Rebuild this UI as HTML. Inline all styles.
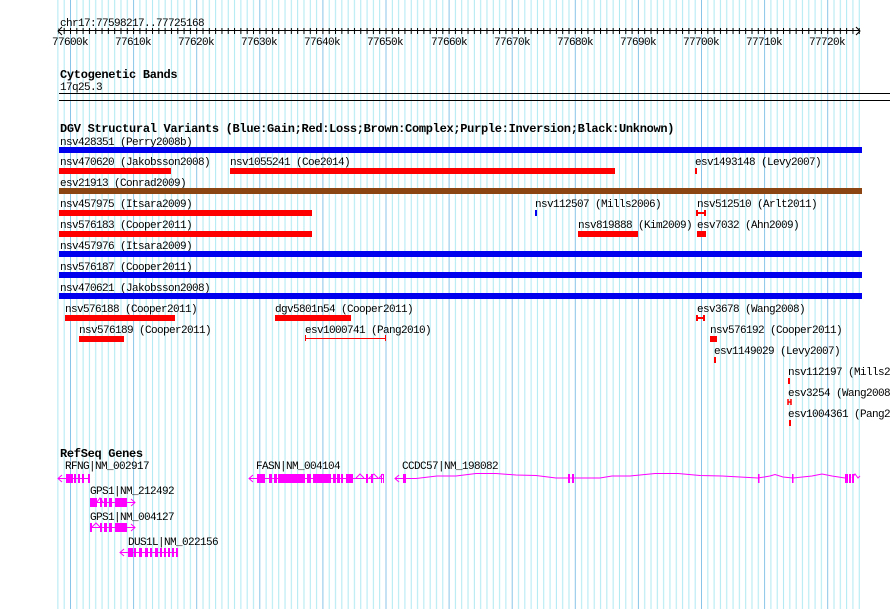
<!DOCTYPE html>
<html><head><meta charset="utf-8"><style>
html,body{margin:0;padding:0;background:#fff;width:890px;height:609px;overflow:hidden}
svg text{font-family:"Liberation Mono",monospace;font-size:11px;letter-spacing:-0.6px;fill:#000}
svg text.b{font-weight:bold;font-size:12px;letter-spacing:-0.3px}
</style></head><body>
<svg width="890" height="609" viewBox="0 0 890 609" xmlns="http://www.w3.org/2000/svg">
<defs>
<pattern id="g" patternUnits="userSpaceOnUse" x="70" y="0" width="63.1" height="10">
<rect x="0" y="0" width="1" height="10" fill="#88c4e8"/>
<rect x="6.31" y="0" width="1" height="10" fill="#aee9f2"/>
<rect x="12.62" y="0" width="1" height="10" fill="#aee9f2"/>
<rect x="18.93" y="0" width="1" height="10" fill="#aee9f2"/>
<rect x="25.24" y="0" width="1" height="10" fill="#aee9f2"/>
<rect x="31.55" y="0" width="1" height="10" fill="#aee9f2"/>
<rect x="37.86" y="0" width="1" height="10" fill="#aee9f2"/>
<rect x="44.17" y="0" width="1" height="10" fill="#aee9f2"/>
<rect x="50.48" y="0" width="1" height="10" fill="#aee9f2"/>
<rect x="56.79" y="0" width="1" height="10" fill="#aee9f2"/>
</pattern>
<pattern id="t" patternUnits="userSpaceOnUse" x="70" y="0" width="6.31" height="10">
<rect x="0" y="0" width="1" height="10" fill="#000"/>
</pattern>
</defs>
<rect x="57" y="0" width="805" height="609" fill="url(#g)"/>

<text x="60" y="26">chr17:77598217..77725168</text>
<rect x="58" y="30" width="802" height="1" fill="#000"/>
<rect x="58" y="28" width="802" height="6" fill="url(#t)"/>
<path d="M62,27 L58,31 L62,35 M856,27 L860,31 L856,35" stroke="#000" fill="none"/>
<g text-anchor="middle">
<text x="70" y="45">77600k</text><text x="133" y="45">77610k</text><text x="196" y="45">77620k</text><text x="259" y="45">77630k</text><text x="322" y="45">77640k</text><text x="385" y="45">77650k</text><text x="449" y="45">77660k</text><text x="512" y="45">77670k</text><text x="575" y="45">77680k</text><text x="638" y="45">77690k</text><text x="701" y="45">77700k</text><text x="764" y="45">77710k</text><text x="827" y="45">77720k</text>
</g>

<text class="b" x="60" y="78">Cytogenetic Bands</text>
<text x="60" y="90">17q25.3</text>
<rect x="59" y="93" width="831" height="1" fill="#000"/>
<rect x="59" y="100" width="831" height="1" fill="#000"/>

<text class="b" x="60" y="132">DGV Structural Variants (Blue:Gain;Red:Loss;Brown:Complex;Purple:Inversion;Black:Unknown)</text>
<text x="60" y="145">nsv428351 (Perry2008b)</text>
<rect x="59" y="147" width="803" height="6" fill="#0000ee"/>

<text x="60" y="165">nsv470620 (Jakobsson2008)</text>
<text x="230" y="165">nsv1055241 (Coe2014)</text>
<text x="695" y="165">esv1493148 (Levy2007)</text>
<rect x="59" y="168" width="112" height="6" fill="#f00"/>
<rect x="230" y="168" width="385" height="6" fill="#f00"/>
<rect x="695" y="168" width="2" height="6" fill="#f00"/>

<text x="60" y="186">esv21913 (Conrad2009)</text>
<rect x="59" y="188" width="803" height="6" fill="#8b4513"/>

<text x="60" y="207">nsv457975 (Itsara2009)</text>
<text x="535" y="207">nsv112507 (Mills2006)</text>
<text x="697" y="207">nsv512510 (Arlt2011)</text>
<rect x="59" y="210" width="253" height="6" fill="#f00"/>
<rect x="535" y="210" width="2" height="6" fill="#0000ee"/>
<path d="M697,210v6M705,210v6M697,213h8" stroke="#f00" stroke-width="2"/>

<text x="60" y="228">nsv576183 (Cooper2011)</text>
<text x="578" y="228">nsv819888 (Kim2009)</text>
<text x="697" y="228">esv7032 (Ahn2009)</text>
<rect x="59" y="231" width="253" height="6" fill="#f00"/>
<rect x="578" y="231" width="60" height="6" fill="#f00"/>
<rect x="697" y="231" width="9" height="6" fill="#f00"/>

<text x="60" y="249">nsv457976 (Itsara2009)</text>
<rect x="59" y="251" width="803" height="6" fill="#0000ee"/>
<text x="60" y="270">nsv576187 (Cooper2011)</text>
<rect x="59" y="272" width="803" height="6" fill="#0000ee"/>
<text x="60" y="291">nsv470621 (Jakobsson2008)</text>
<rect x="59" y="293" width="803" height="6" fill="#0000ee"/>

<text x="65" y="312">nsv576188 (Cooper2011)</text>
<text x="275" y="312">dgv5801n54 (Cooper2011)</text>
<text x="697" y="312">esv3678 (Wang2008)</text>
<rect x="65" y="315" width="110" height="6" fill="#f00"/>
<rect x="275" y="315" width="76" height="6" fill="#f00"/>
<path d="M697,315v6M704,315v6M697,318h7" stroke="#f00" stroke-width="2"/>

<text x="79" y="333">nsv576189 (Cooper2011)</text>
<text x="305" y="333">esv1000741 (Pang2010)</text>
<text x="710" y="333">nsv576192 (Cooper2011)</text>
<rect x="79" y="336" width="45" height="6" fill="#f00"/>
<path d="M305.5,335v6M385.5,335v6M305,338.5h81" stroke="#f00" stroke-width="1"/>
<rect x="710" y="336" width="7" height="6" fill="#f00"/>

<text x="714" y="354">esv1149029 (Levy2007)</text>
<rect x="714" y="357" width="2" height="6" fill="#f00"/>
<text x="788" y="375">nsv112197 (Mills2006)</text>
<rect x="788" y="378" width="2" height="6" fill="#f00"/>
<text x="788" y="396">esv3254 (Wang2008)</text>
<path d="M788,399v6M791,399v6M788,402h3" stroke="#f00" stroke-width="1.5"/>
<text x="788" y="417">esv1004361 (Pang2010)</text>
<rect x="789" y="420" width="2" height="6" fill="#f00"/>

<text class="b" x="60" y="457">RefSeq Genes</text>
<text x="65" y="469">RFNG|NM_002917</text>
<text x="256" y="469">FASN|NM_004104</text>
<text x="402" y="469">CCDC57|NM_198082</text>
<text x="90" y="494">GPS1|NM_212492</text>
<text x="90" y="520">GPS1|NM_004127</text>
<text x="128" y="545">DUS1L|NM_022156</text>

<g fill="#f0f" stroke="#f0f">
<path d="M62,475 L58,478.5 L62,482 M58,478.5 H90" fill="none"/>
<rect x="66" y="474" width="7" height="9" stroke="none"/>
<rect x="74" y="474" width="2" height="9" stroke="none"/>
<rect x="78" y="474" width="2" height="9" stroke="none"/>
<rect x="82" y="474" width="2" height="9" stroke="none"/>
<rect x="88" y="474" width="2" height="9" stroke="none"/>
<path d="M253,475 L249,478.5 L253,482 M249,478.5 H384 M356,478 L360,474 L364,478 M369,478 L374,474 L378,478 M379,478 L383,474" fill="none"/>
<rect x="257" y="474" width="8" height="9" stroke="none"/>
<rect x="269" y="474" width="3" height="9" stroke="none"/>
<rect x="274" y="474" width="3" height="9" stroke="none"/>
<rect x="278" y="474" width="27" height="9" stroke="none"/>
<rect x="307" y="474" width="4" height="9" stroke="none"/>
<rect x="313" y="474" width="18" height="9" stroke="none"/>
<rect x="333" y="474" width="3" height="9" stroke="none"/>
<rect x="337" y="474" width="3" height="9" stroke="none"/>
<rect x="341" y="474" width="2" height="9" stroke="none"/>
<rect x="346" y="474" width="7" height="9" stroke="none"/>
<rect x="366" y="474" width="2" height="9" stroke="none"/>
<rect x="371" y="474" width="2" height="9" stroke="none"/>
<rect x="383" y="474" width="1" height="9" stroke="none"/>
<rect x="381" y="474" width="1" height="9" stroke="none"/>
<path d="M399,475 L395,478.5 L399,482 M395,478.5 H416 L437,476 L456,476 L476,473.5 L496,473.5 L516,475 L536,475.5 L556,478 L600,478 L612,476 L630,476 L655,473.5 L678,473.5 L700,475.5 L722,476 L758,478 L770,476 L775,474.5 L783,477 L793,478 L812,476 L822,474 L832,476 L845,478 M852,478 L855,474 L858,478 L860,476" fill="none" stroke-width="1"/>
<rect x="403" y="474" width="3" height="9" stroke="none"/>
<rect x="568" y="474" width="2" height="9" stroke="none"/>
<rect x="572" y="474" width="2" height="9" stroke="none"/>
<rect x="758" y="474" width="1.5" height="9" stroke="none"/>
<rect x="792" y="474" width="1.5" height="9" stroke="none"/>
<rect x="845" y="474" width="3" height="9" stroke="none"/>
<rect x="849" y="474" width="2" height="9" stroke="none"/>
<rect x="852" y="474" width="2" height="9" stroke="none"/>
<path d="M90,502.5 H135 M131,499 L135,502.5 L131,506 M97,502 L100,498 L103,502" fill="none"/>
<rect x="90" y="498" width="7" height="9" stroke="none"/>
<rect x="100" y="498" width="2" height="9" stroke="none"/>
<rect x="104" y="498" width="3" height="9" stroke="none"/>
<rect x="109" y="498" width="3" height="9" stroke="none"/>
<rect x="115" y="498" width="12" height="9" stroke="none"/>
<path d="M90,527.5 H135 M131,524 L135,527.5 L131,531 M91,528 L96,523 L100,527" fill="none"/>
<rect x="90" y="523" width="2" height="9" stroke="none"/>
<rect x="100" y="523" width="2" height="9" stroke="none"/>
<rect x="104" y="523" width="3" height="9" stroke="none"/>
<rect x="109" y="523" width="3" height="9" stroke="none"/>
<rect x="115" y="523" width="12" height="9" stroke="none"/>
<path d="M124,549 L120,552.5 L124,556 M120,552.5 H178" fill="none"/>
<rect x="128" y="548" width="5" height="9" stroke="none"/>
<rect x="134" y="548" width="2" height="9" stroke="none"/>
<rect x="139" y="548" width="3" height="9" stroke="none"/>
<rect x="145" y="548" width="3" height="9" stroke="none"/>
<rect x="150" y="548" width="2" height="9" stroke="none"/>
<rect x="155" y="548" width="3" height="9" stroke="none"/>
<rect x="160" y="548" width="2" height="9" stroke="none"/>
<rect x="164" y="548" width="2" height="9" stroke="none"/>
<rect x="168" y="548" width="2" height="9" stroke="none"/>
<rect x="172" y="548" width="2" height="9" stroke="none"/>
<rect x="176" y="548" width="2" height="9" stroke="none"/>
</g>
</svg>
</body></html>
